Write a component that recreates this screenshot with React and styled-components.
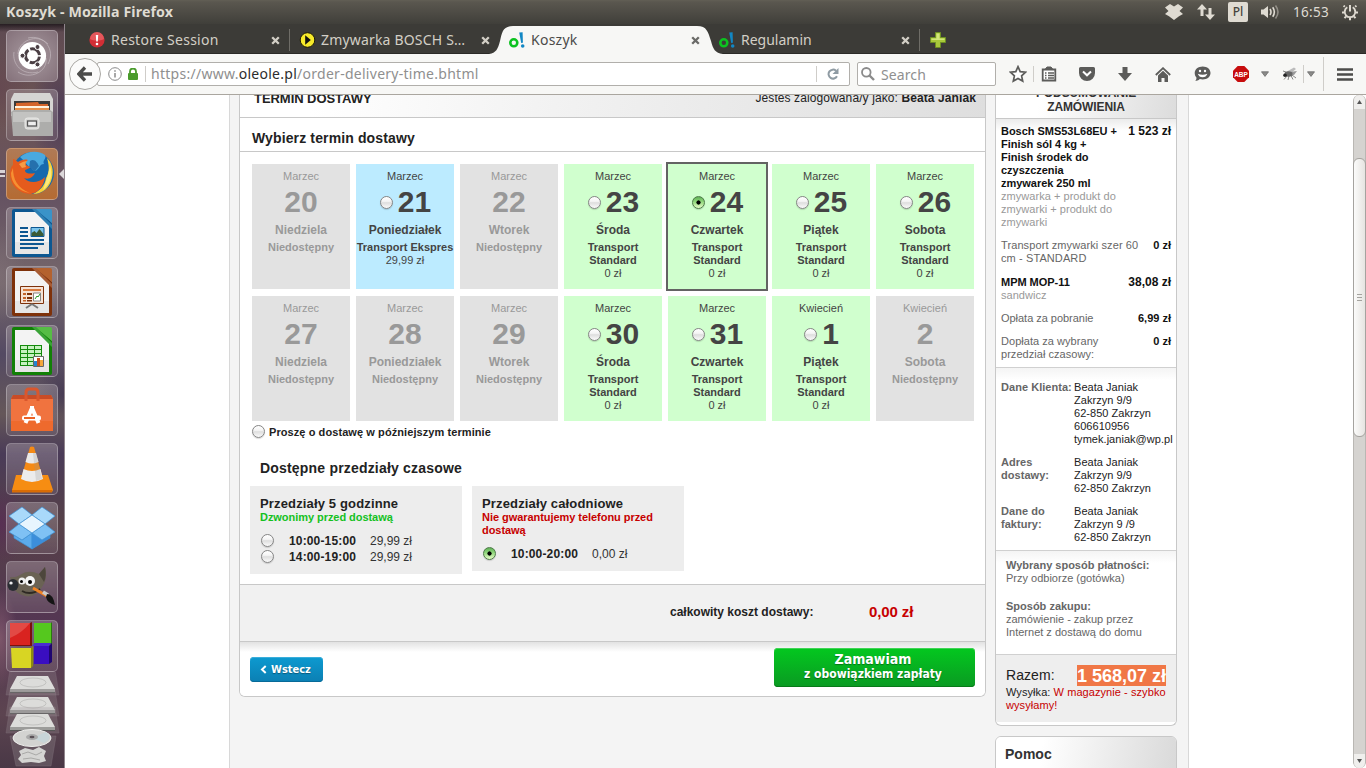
import React from 'react';
import styled, { createGlobalStyle, css } from 'styled-components';

const GlobalStyle = createGlobalStyle`
  * { box-sizing: border-box; }
  body { margin: 0; overflow: hidden; }
`;

const UI_FONT = '"Noto Sans", "Open Sans", sans-serif';
const PAGE_FONT = '"Liberation Sans", Arial, sans-serif';

/* ---------- desktop shell ---------- */

const Desktop = styled.div`
  width: 1366px;
  height: 768px;
  overflow: hidden;
  display: flex;
  flex-direction: column;
  font-family: ${UI_FONT};
`;

const TopPanel = styled.header`
  height: 24px;
  flex: none;
  display: flex;
  align-items: center;
  padding: 0 4px 0 6px;
  color: #dfdbd2;
  background: linear-gradient(#625f55 0, #5a574f 2px, #403f3a 100%);
`;

const WindowTitle = styled.div`
  flex: 1;
  font-size: 14.2px;
  font-weight: 700;
  line-height: 22px;
  letter-spacing: 0.13px;
`;

const Indicator = styled.div`
  width: ${(p) => p.$w}px;
  margin-left: ${(p) => p.$ml || 0}px;
  height: 24px;
  display: flex;
  align-items: center;
  justify-content: center;
`;

const LangBadge = styled.div`
  width: 20px;
  height: 20px;
  margin-left: 6px;
  border-radius: 2px;
  background: #dfdbd2;
  color: #45433d;
  font-size: 12px;
  font-weight: 500;
  line-height: 20px;
  text-align: center;
`;

const Clock = styled.div`
  width: 37px;
  margin-left: 9px;
  font-size: 13.5px;
  line-height: 22px;
  letter-spacing: 0.3px;
  white-space: nowrap;
`;

const Workspace = styled.div`
  flex: 1;
  display: flex;
  min-height: 0;
`;

const Launcher = styled.nav`
  width: 65px;
  flex: none;
  padding: 6px 0 0 6px;
  display: flex;
  flex-direction: column;
  gap: 7px;
  border-right: 1px solid #90858c;
  background:
    linear-gradient(rgba(20, 15, 18, 0.75), rgba(20, 15, 18, 0) 8px),
    radial-gradient(ellipse 30px 40px at 0 65px, rgba(100, 70, 80, 0.7), transparent),
    radial-gradient(ellipse 30px 60px at 60px 90px, rgba(55, 42, 88, 0.6), transparent),
    radial-gradient(ellipse 25px 50px at 0 250px, rgba(130, 115, 122, 0.5), transparent),
    radial-gradient(ellipse 30px 30px at 65px 370px, rgba(45, 35, 75, 0.5), transparent),
    radial-gradient(ellipse 30px 40px at 0 500px, rgba(90, 30, 95, 0.5), transparent),
    radial-gradient(ellipse 18px 50px at 0 615px, rgba(150, 105, 120, 0.6), transparent),
    linear-gradient(#5e4a52 0, #6d5454 90px, #655262 170px, #75676b 260px, #544a63 330px, #655759 390px, #4a3b58 430px, #564148 500px, #543653 600px, #5c4450 690px, #493846 100%);
`;

const Tile = styled.div`
  position: relative;
  width: 52px;
  height: 52px;
  flex: none;
  border-radius: 5px;
  border: 1px solid rgba(255, 255, 255, 0.28);
  background: ${(p) => p.$bg || 'linear-gradient(rgba(200,190,195,0.34), rgba(160,145,155,0.2))'};
  svg { display: block; margin: -1px; }
`;

const RunMark = styled.div`
  position: absolute;
  left: -7px;
  top: 21px;
  width: 5px;
  height: 7px;
  border-top: 3px solid #d8d4d6;
  border-bottom: 2px solid #d8d4d6;
`;

const FocusMark = styled.div`
  position: absolute;
  left: 52px;
  top: 20px;
  border: 5px solid transparent;
  border-left: 0;
  border-right-color: #dcd8da;
`;

const Stack = styled.div`
  margin: -7px 0 0 -6px;
  width: 65px;
  height: 96px;
  svg { display: block; }
`;

/* ---------- browser chrome ---------- */

const Browser = styled.main`
  flex: 1;
  display: flex;
  flex-direction: column;
  min-width: 0;
`;

const TabStrip = styled.div`
  height: 30px;
  flex: none;
  display: flex;
  padding-left: 14px;
  background: #3c3b37;
  border-bottom: 1px solid #2b2a27;
`;

const Tab = styled.div`
  position: relative;
  width: 210px;
  height: 30px;
  flex: none;
  display: flex;
  align-items: center;
  padding: 2px 8px 0 10px;
  color: ${(p) => (p.$active ? '#4b4b49' : '#d3cfc6')};
  ${(p) => p.$divider && css`
    &::after {
      content: '';
      position: absolute;
      right: -1px;
      top: 5px;
      width: 1px;
      height: 22px;
      background: #6f6d67;
    }
  `}
`;

const ActiveShape = styled.svg`
  position: absolute;
  left: -10px;
  top: 2px;
`;

const TabIcon = styled.div`
  position: relative;
  width: 16px;
  height: 16px;
  margin-right: 6px;
  svg { display: block; }
`;

const TabTitle = styled.div`
  position: relative;
  flex: 1;
  font-size: 14px;
  line-height: 20px;
  white-space: nowrap;
  letter-spacing: ${(p) => p.$ls || 0}px;
`;

const TabClose = styled.div`
  position: relative;
  width: 12px;
  height: 16px;
  display: flex;
  align-items: center;
  justify-content: center;
`;

const NewTab = styled.div`
  width: 38px;
  display: flex;
  align-items: center;
  justify-content: center;
  padding-top: 3px;
`;

const NavBar = styled.div`
  height: 41px;
  flex: none;
  display: flex;
  align-items: center;
  padding-left: 4px;
  background: #f7f7f5;
  border-bottom: 1px solid #aaa69f;
`;

const BackButton = styled.div`
  position: relative;
  z-index: 1;
  width: 32px;
  height: 32px;
  flex: none;
  border-radius: 50%;
  border: 1px solid #a9a7a3;
  background: #fbfbfa;
  display: flex;
  align-items: center;
  justify-content: center;
`;

const Field = styled.div`
  height: 24px;
  display: flex;
  align-items: center;
  background: #fff;
  border: 1px solid #b1afab;
  border-radius: 2px;
  color: #8f8f8f;
  font-size: 14px;
`;

const UrlField = styled(Field)`
  width: 753px;
  margin-left: -4px;
  padding-left: 8px;
`;

const SearchField = styled(Field)`
  width: 139px;
  margin-left: 7px;
  padding-left: 3px;
  gap: 6px;
  letter-spacing: 0.1px;
`;

const UrlText = styled.div`
  flex: 1;
  white-space: nowrap;
  line-height: 20px;
  letter-spacing: 0.27px;
  b { font-weight: 400; color: #2c2c2c; }
`;

const Rule = styled.div`
  width: 1px;
  height: ${(p) => p.$h || 16}px;
  margin: 0 ${(p) => p.$mr || 0}px 0 ${(p) => p.$ml || 0}px;
  flex: none;
  background: #cfcdc9;
`;

const Slot = styled.div`
  width: ${(p) => p.$w}px;
  margin-left: ${(p) => p.$ml || 0}px;
  flex: none;
  display: flex;
  align-items: center;
  justify-content: center;
`;

const Viewport = styled.div`
  flex: 1;
  min-height: 0;
  display: flex;
  overflow: hidden;
  background: #fff;
`;

const ScrollBar = styled.div`
  width: 13px;
  flex: none;
  display: flex;
  flex-direction: column;
  background: #d2d0cd;
  border: 1px solid #b9b7b3;
  border-top: 0;
  border-bottom: 0;
  border-radius: 6px;
`;

const ScrollArrow = styled.div`
  height: 14px;
  display: flex;
  align-items: center;
  justify-content: center;
  background: #f0efed;
  border-radius: ${(p) => (p.$down ? '0 0 6px 6px' : '6px 6px 0 0')};
`;

const ScrollTrough = styled.div`
  flex: ${(p) => (p.$h ? 'none' : 1)};
  height: ${(p) => (p.$h ? p.$h + 'px' : 'auto')};
  background: #d5d3d0;
`;

const ScrollThumb = styled.div`
  height: 279px;
  margin: 0 -1px;
  border: 1px solid #a5a39f;
  border-radius: 6px;
  background: linear-gradient(90deg, #fbfbfa, #e6e4e1);
  display: flex;
  flex-direction: column;
  align-items: center;
  justify-content: center;
  gap: 2px;
`;

const Grip = styled.div`
  width: 5px;
  height: 1px;
  background: #a5a39f;
`;

/* ---------- shop page ---------- */

const PageArea = styled.div`
  flex: 1;
  overflow: hidden;
  font-family: ${PAGE_FONT};
  color: #222;
`;

const Page = styled.div`
  width: 960px;
  height: 700px;
  margin: -15px 0 0 164px;
  padding: 0 11px 0 9px;
  display: flex;
  align-items: flex-start;
  gap: 9px;
  background: #f4f4f4;
  border: 1px solid #d8d8d8;
  border-width: 0 1px;
`;

const MainPanel = styled.section`
  width: 747px;
  flex: none;
  border: 1px solid #c8c8c8;
  border-top: 0;
  border-radius: 0 0 6px 6px;
  background: #fff;
  overflow: hidden;
`;

const PanelHeader = styled.div`
  height: 38px;
  padding: 0 9px 11px 14px;
  display: flex;
  align-items: flex-end;
  justify-content: space-between;
  font-size: 12px;
  line-height: 15px;
  letter-spacing: 0.1px;
  border-bottom: 1px solid #c8c8c8;
  background: linear-gradient(100deg, #fff 10%, #f1f1f1 45%, #dedede 100%);
  h1 { margin: 0; font-size: 13px; line-height: 15px; letter-spacing: -0.05px; }
`;

const SectionTitle = styled.h2`
  margin: 0;
  height: 34px;
  padding: 12px 12px 0;
  font-size: 14px;
  line-height: 16px;
  letter-spacing: 0.13px;
  border-bottom: 1px solid #c8c8c8;
`;

const CalendarGrid = styled.div`
  display: grid;
  grid-template-columns: repeat(7, 98px);
  grid-auto-rows: 125px;
  column-gap: 6px;
  row-gap: 7px;
  padding: 12px 12px 0;
`;

const tone = {
  off: css`background: #e2e2e2; color: #999;`,
  express: css`background: #bcebff; color: #444;`,
  std: css`background: #d0ffce; color: #444;`,
};

const DayCard = styled.div`
  ${(p) => tone[p.$kind]}
  padding-top: 6px;
  text-align: center;
  font-size: 11px;
  line-height: 13px;
  outline: ${(p) => (p.$selected ? '2px solid #636363' : 'none')};
`;

const DayNumber = styled.div`
  margin-top: 2px;
  padding-left: ${(p) => (p.$choice ? 1 : 0)}px;
  display: flex;
  align-items: center;
  justify-content: center;
  gap: 5px;
  font-size: 30px;
  font-weight: 700;
  line-height: 34px;
`;

const WeekDay = styled.div`
  margin: 4px 0;
  font-size: 12px;
  font-weight: 700;
  line-height: 14px;
`;

const Service = styled.div`
  font-weight: 700;
  white-space: pre-line;
  margin: 0 -2px;
`;

const Radio = styled.span`
  flex: none;
  width: 13px;
  height: 13px;
  margin-top: ${(p) => p.$mt || 0}px;
  border-radius: 50%;
  border: 1px solid ${(p) => (p.$on ? '#4d7a48' : '#858585')};
  box-shadow: 0 1px 1px rgba(0, 0, 0, 0.15);
  background: ${(p) =>
    p.$on
      ? 'radial-gradient(circle at 50% 50%, #000 0 1.8px, transparent 2.4px), linear-gradient(#5fb156, #94d97f 45%, #e6fbc8)'
      : 'linear-gradient(#fff, #f4f4f4 40%, #dedede 52%, #fafafa)'};
`;

const LaterOption = styled.div`
  height: 22px;
  padding-left: 12px;
  display: flex;
  align-items: center;
  gap: 4px;
  font-size: 11px;
  font-weight: 700;
  letter-spacing: 0.08px;
`;

const SlotsTitle = styled.h2`
  margin: 17px 0 10px 20px;
  font-size: 14px;
  line-height: 16px;
  letter-spacing: 0.19px;
`;

const SlotBoxes = styled.div`
  display: flex;
  align-items: flex-start;
  gap: 10px;
  padding: 0 10px 10px;
`;

const SlotBox = styled.div`
  width: 212px;
  padding: 10px 10px 9px;
  background: #ededed;
  h3 { margin: 0; font-size: 13px; line-height: 15px; letter-spacing: 0.15px; }
`;

const SlotNote = styled.p`
  margin: 0 0 9px;
  font-size: 11px;
  font-weight: 700;
  line-height: 13px;
  letter-spacing: -0.05px;
  color: ${(p) => p.$color};
`;

const TimeRow = styled.label`
  height: 16px;
  display: grid;
  grid-template-columns: 28px 81px auto;
  align-items: center;
  padding-left: 1px;
  font-size: 12px;
  line-height: 16px;
  white-space: nowrap;
  color: #333;
  b { color: #222; letter-spacing: 0.15px; }
`;

const CostBand = styled.div`
  height: 58px;
  padding: 19px 0 0 430px;
  display: flex;
  border: 1px solid #c8c8c8;
  border-width: 1px 0;
  background: #f1f1f1;
  font-weight: 700;
  font-size: 12px;
  line-height: 16px;
  span { width: 199px; }
  strong { color: #c70000; font-size: 15px; letter-spacing: -0.1px; }
`;

const Actions = styled.div`
  height: 54px;
  padding: 6px 10px 0;
  display: flex;
  justify-content: space-between;
  align-items: flex-start;
  background: linear-gradient(#e2e2e2, #fff 10px);
  font-family: "DejaVu Sans Condensed", "DejaVu Sans", sans-serif;
  font-weight: 700;
  color: #fff;
  text-shadow: 0 1px 1px rgba(0, 0, 0, 0.35);
`;

const BackLink = styled.div`
  width: 73px;
  height: 25px;
  margin-top: 9px;
  display: flex;
  align-items: center;
  gap: 4px;
  padding: 0 0 1px 11px;
  border-radius: 4px;
  background: linear-gradient(#0d9ad0, #0b7fb3);
  box-shadow: inset 0 -1px 0 #076a98, inset 0 1px 0 #3aaedb;
  font-size: 11px;
  svg { margin-left: -1px; }
`;

const OrderButton = styled.div`
  width: 201px;
  height: 39px;
  padding: 4px 3px 0 0;
  border-radius: 4px;
  background: linear-gradient(#03c81f, #0a9a22);
  box-shadow: inset 0 -1px 0 #077a18, inset 0 1px 0 #3fd455;
  text-align: center;
  font-size: 14px;
  line-height: 15px;
  small { display: block; font-size: 12px; line-height: 14px; }
`;

const Sidebar = styled.aside`
  width: 182px;
  flex: none;
`;

const SidePanel = styled.div`
  border: 1px solid #c8c8c8;
  border-top-width: ${(p) => (p.$open ? 0 : 1)}px;
  border-radius: ${(p) => (p.$open ? '0 0 6px 6px' : '6px')};
  margin-bottom: 10px;
  background: #fff;
  overflow: hidden;
  font-size: 11px;
  line-height: 13px;
`;

const SideHeader = styled.div`
  height: 39px;
  padding-top: 6px;
  text-align: center;
  font-size: 12px;
  font-weight: 700;
  line-height: 14px;
  letter-spacing: -0.1px;
  color: #333;
  border-bottom: 1px solid #c8c8c8;
  background: linear-gradient(100deg, #fff 25%, #dcdcdc 100%);
`;

const SideSection = styled.div`
  height: ${(p) => p.$h}px;
  padding: ${(p) => p.$pad};
  border-bottom: 1px solid #d0d0d0;
  background: linear-gradient(${(p) => p.$shade || '#f4f4f4'}, #fff 12px);
  color: #666;
`;

const OrderItem = styled.div`
  display: flex;
  justify-content: space-between;
  min-height: ${(p) => p.$h}px;
  margin-bottom: 10px;
  color: #666;
`;

const ItemName = styled.div`
  white-space: pre-line;
  letter-spacing: ${(p) => p.$ls ?? 0.04}px;
  b { color: #111; letter-spacing: -0.03px; }
  i { font-style: normal; color: #999; }
`;

const ItemPrice = styled.div`
  font-size: ${(p) => (p.$big ? 12 : 11)}px;
  font-weight: 700;
  color: #111;
  white-space: nowrap;
`;

const Contact = styled.div`
  display: grid;
  grid-template-columns: 73px auto;
  margin-bottom: 10px;
  white-space: pre;
  color: #222;
  letter-spacing: 0.04px;
  b { color: #666; }
`;

const PaymentInfo = styled.p`
  margin: 0 0 15px;
  white-space: pre-line;
`;

const TotalBox = styled.div`
  height: 67px;
  margin-bottom: 3px;
  padding: 10px 8px 0 10px;
  background: #eee;
  color: #222;
  letter-spacing: 0.07px;
  em { font-style: normal; color: #c70000; }
`;

const TotalRow = styled.div`
  display: flex;
  justify-content: space-between;
  align-items: flex-start;
  height: 21px;
  margin-right: 2px;
  font-size: 14px;
  line-height: 21px;
`;

const TotalSum = styled.strong`
  height: 21px;
  background: #f07746;
  color: #fff;
  font-size: 18px;
  line-height: 22px;
  letter-spacing: 0;
  white-space: nowrap;
`;

const HelpHeader = styled.div`
  height: 60px;
  padding: 9px;
  font-size: 14px;
  font-weight: 700;
  line-height: 16px;
  color: #333;
  background: linear-gradient(100deg, #fff 25%, #d8d8d8 100%);
`;

/* ---------- icons ---------- */

const G = '#5c5c5a';

const Favicon = () => (
  <svg width="16" height="16" viewBox="0 0 16 16" fill="none">
    <circle cx="4.8" cy="10.8" r="3.5" stroke="#0cc220" strokeWidth="2.6" />
    <path d="M10.2.5l3.4-.3.3 10.6-1.7.3z" fill="#1287c4" />
    <circle cx="13.700" cy="14" r="1.8" fill="#1287c4" />
  </svg>
);

const ErrorIcon = () => (
  <svg width="16" height="16"><circle cx="8" cy="8" r="7.6" fill="#d22e35" /><path d="M1 7a7 7 0 0 1 14 0c-4 2-10 2-14 0z" fill="#e4575b" /><path d="M6.8 3h2.4l-.4 6.4H7.2z" fill="#fff" /><circle cx="8" cy="12" r="1.3" fill="#fff" /></svg>
);

const PlayIcon = () => (
  <svg width="18" height="16"><circle cx="8.500" cy="8" r="7.300" fill="#f7ea2a" stroke="#1d1a05" /><path d="M6.200 3.200l5.600 4.800-5.600 4.800z" fill="#111" /></svg>
);

const Cross = ({ color }) => (
  <svg width="9" height="9"><path d="M1.2 1.2l6.6 6.6M7.8 1.2L1.2 7.8" stroke={color} strokeWidth="2.3" /></svg>
);

const Caret = () => <svg width="8" height="6"><path d="M.5.8h7L4 5.4z" fill="#8b8b89" stroke="#6b6b69" strokeWidth=".8" /></svg>;

const Doc = ({ color, dark, light, children }) => (
  <svg width="52" height="52">
    <path d="M8 2h24l14 14v32a2 2 0 0 1-2 2H8a2 2 0 0 1-2-2V4a2 2 0 0 1 2-2z" fill={dark} />
    <path d="M29 2h15a2 2 0 0 1 2 2v12z" fill={light} />
    <path d="M9 5h20.500L43 18.500V47H9z" fill="#f3f3f3" />
    <path d="M9 35h34v12H9z" fill="#dedede" opacity=".6" />
    <path d="M26 2h4l16 16v4z" fill={color} />
    {children}
  </svg>
);

function LauncherIcons() {
  return (
    <Launcher>
      <Tile $bg="radial-gradient(circle, #a89aa0, #84717a)">
        <svg width="52" height="52" fill="none">
          <path d="M12 24C12 12 30 2 42 14M22 8c16-4 28 12 20 26M40 28c2 14-16 22-28 14M8 22c-2 12 8 24 24 20" stroke="#c9bfc4" opacity=".6" />
          <circle cx="26.300" cy="25.700" r="13.800" fill="#fff" />
          <circle cx="26.500" cy="25.700" r="7" stroke="#4b3f44" strokeWidth="3" strokeDasharray="12.700 2" strokeDashoffset="-1" />
          <g fill="#4b3f44" stroke="#fff"><circle cx="16.500" cy="25.700" r="2.500" /><circle cx="31.500" cy="17" r="2.500" /><circle cx="31.500" cy="34.400" r="2.500" /></g>
        </svg>
      </Tile>
      <Tile>
        <svg width="52" height="52">
          <path d="M8 4h36l3 6v17H5V10z" fill="#d5d5d3" />
          <path d="M8 12h36v14H8z" fill="#3b3a38" />
          <path d="M10 14l22-1 1 2h9v10H10z" fill="#d5652a" />
          <path d="M9 17h34v2H9z" fill="#fff3df" />
          <path d="M9 19h34v6H9z" fill="#e6904b" />
          <path d="M5 23l3-2h36l3 2v24H7z" fill="#adadab" />
          <path d="M7 23h38v10H7z" fill="#c3c3c1" />
          <rect x="19" y="29" width="14" height="11" rx="2.500" fill="#d8d8d6" stroke="#e9e9e7" />
          <rect x="21.500" y="32" width="9" height="5" fill="#eee" stroke="#555" strokeWidth="1.300" />
        </svg>
      </Tile>
      <Tile $bg="linear-gradient(#b07a55, #b46b33)">
        <svg width="52" height="52">
          <circle cx="27" cy="25" r="21" fill="#1669ae" />
          <path d="M14 9c7-6 18-7 25-2 2 4-3 5-1 9-5 0-4 5-9 7-6-2-8-8-15-14z" fill="#49a9df" />
          <path d="M24 13c4-3 7 1 9 5l-4 5-6-3z" fill="#0e4b8c" opacity=".6" />
          <path d="M41 10c5 5 7 12 5 20-2 9-9 16-19 16 8-4 12-9 13-16 4-6 3-13 1-20z" fill="#f8cf35" />
          <path d="M44 18c3 8 1 18-7 24l4-12z" fill="#fbe97b" />
          <path d="M7 11c2 0 3 2 5 3 3-2 7-3 10-2-2 1-3 3-2 5l4 2c0 2-5 2-5 4 1 3 6 3 10 2-2 4-6 7-11 5 5 6 15 5 21-1-1 9-7 16-14 17C13 46 4 37 4 26c0-5 1-7 3-9z" fill="#e55b1d" />
          <path d="M7 20c0 11 4 20 17 25C12 43 5 35 5 25z" fill="#f69032" />
          <path d="M13 16c3-2 6-3 8-3-2 2-2 4-1 6l-4 1z" fill="#f79b45" />
        </svg>
        <RunMark />
        <FocusMark />
      </Tile>
      <Tile>
        <Doc color="#2d7fb3" dark="#0d5791" light="#3a93c8">
          <g fill="#0d5791"><path d="M14 20h8v2h-8zM14 24h8v2h-8zM14 28h8v2h-8zM14 32h24v2H14zM14 36h24v2H14zM14 40h18v2H14z" /></g>
          <path d="M25 20.500h13v9H25z" fill="#7bc4ec" stroke="#0d5791" /><path d="M25.500 29v-3l3-2 2 2 3-4 4 5v2z" fill="#3b5b35" />
        </Doc>
      </Tile>
      <Tile>
        <Doc color="#a85c34" dark="#7e310a" light="#b4622e">
          <path d="M14.500 20.500h23v17h-23z" fill="#f6e2d5" stroke="#7e310a" /><path d="M17 23h18v2H17z" fill="#d97b3e" />
          <path d="M17 27h3v2h-3zM17 31h3v2h-3zM17 34h3v1.500h-3z" fill="#c4632a" /><path d="M21 27h5v2h-5zM21 31h5v2h-5zM21 34h5v1.500h-5z" fill="#7e310a" />
          <path d="M27.500 27h7v8h-7z" fill="#fff" stroke="#888" /><path d="M29 33l2-3 1 1 2-3" stroke="#2a9a2a" fill="none" />
          <path d="M26 38l-6 4M26 38l6 4" stroke="#777" strokeWidth="2" />
        </Doc>
      </Tile>
      <Tile>
        <Doc color="#3aa337" dark="#118006" light="#56bd45">
          <path d="M14 20h22v21H14z" fill="#138a0c" />
          <g fill="#c6f1bf">{[0, 1, 2].flatMap((c) => [0, 1, 2, 3, 4].map((r) => <rect key={`${c}-${r}`} x={15 + c * 7} y={21 + r * 4} width="6" height="3" />))}</g>
          <path d="M27.500 31.500h10v10h-10z" fill="#fff" stroke="#666" /><path d="M28 36h3v5h-3z" fill="#2583d0" /><path d="M31 33h3v8h-3z" fill="#c84f1b" /><path d="M34 35h3v6h-3z" fill="#f3a73b" />
        </Doc>
      </Tile>
      <Tile>
        <svg width="52" height="52">
          <path d="M7 11h38l2 4v32H5V15z" fill="#f0733f" /><path d="M7 11h38l2 4H5z" fill="#c94c26" /><path d="M5 37h42v10H5z" fill="#ee6a2d" />
          <path d="M20 17V9q0-4 3-4h6q3 0 3 4v8" stroke="#d9572d" strokeWidth="3" fill="none" />
          <path d="M26 24l-6.500 15M26 24l6.500 15" stroke="#fff" strokeWidth="4" fill="none" /><path d="M24 22h4v4h-4z" fill="#fff" />
          <rect x="16" y="31.500" width="19" height="5" rx="2" fill="#fff" /><rect x="18" y="33" width="11" height="2" fill="#ec6327" />
        </svg>
      </Tile>
      <Tile>
        <svg width="52" height="52">
          <path d="M10 32h32l5 15-1 2H6v-2z" fill="#f68d12" /><path d="M6 47h40v2.500H6z" fill="#d96c05" />
          <path d="M24 4q2-1 4 0l9 32q-11 7-22 0z" fill="#f58a15" />
          <path d="M22 10h8l2.500 9q-6.500 3-13 0z" fill="#e9e9e9" /><path d="M17.500 26q8.500 4 17 0l2.500 10q-11 6-22 0z" fill="#ececec" />
          <path d="M27 10h3l6 26-6 2z" fill="#999" opacity=".25" />
        </svg>
      </Tile>
      <Tile>
        <svg width="52" height="52" stroke="#3e94d8" strokeWidth=".7">
          <path d="M3 14l13-9 10 8-13 9zM49 14L36 5l-10 8 13 9z" fill="#a9d9fa" />
          <path d="M8 33l8 5 10-7v16L8 36z" fill="#5cabec" /><path d="M44 33l-8 5-10-7v16l18-11z" fill="#3c8edb" />
          <path d="M3 30l10-8 13 9-10 7zM49 30l-10-8-13 9 10 7z" fill="#7fc1f4" />
          <path d="M13 22l13-9 13 9-13 9z" fill="#e8f5fe" />
        </svg>
      </Tile>
      <Tile>
        <svg width="52" height="52">
          <path d="M4 16q5 1 10-2 8-6 19-1L39 6q3 12-3 20-8 13-20 8-6-2-9-8z" fill="#6a6254" /><path d="M33 13l6-7q2 9-1 15z" fill="#4d463c" />
          <ellipse cx="7" cy="24" rx="5.500" ry="6" fill="#2a2d32" /><ellipse cx="5" cy="22" rx="1.700" ry="1.500" fill="#eee" />
          <circle cx="16" cy="20" r="3.500" fill="#eee" /><circle cx="24" cy="20" r="5" fill="#f5f5f5" /><circle cx="15.500" cy="20.500" r="1.500" /><circle cx="24" cy="21" r="2" />
          <path d="M16 30q9 5 18-2" stroke="#2e2923" strokeWidth="2" fill="none" />
          <path d="M27 27l14 8" stroke="#f08324" strokeWidth="3" /><path d="M37 31l5 3" stroke="#ccc" strokeWidth="3.500" /><path d="M41 33q6 0 8 11-8-2-9-8z" fill="#151515" />
        </svg>
      </Tile>
      <Tile>
        <svg width="52" height="52">
          <path d="M4 3h22v22H4z" fill="#d92320" /><path d="M4 3h20q-8 10-20 15z" fill="#e8645f" opacity=".6" /><path d="M26 2l-2 1v22H4v1h22z" fill="#7b0f0c" />
          <path d="M28 3h17v20H28z" fill="#55c81e" /><path d="M45 3l1-1v22H30l-2-1h17z" fill="#2a7a0e" />
          <path d="M5 28h20v20H6z" fill="#d8d523" /><path d="M25 28l2-2v20l-2 2z" fill="#8d8b10" />
          <path d="M26 26l3-3h16l-2 3z" fill="#4a2dd0" /><path d="M28 26h15v18H28z" fill="#3a0ec0" /><path d="M43 26l3-3v19l-3 2z" fill="#1f0670" />
        </svg>
      </Tile>
      <Stack>
        <svg width="65" height="96">
          {[0, 21, 38].map((dy) => (
            <g key={dy} transform={`translate(0 ${dy})`}>
              <path d="M10 -3h45l4 26H6z" fill="#9b9297" opacity=".28" stroke="#c8c0c4" strokeWidth=".5" />
              <path d="M17 4h31l7 13H10z" fill="#dcdcda" /><path d="M10 17h45v4H10z" fill="#9c9c9a" /><path d="M10 20h45v1H10z" fill="#555" />
              <ellipse cx="33" cy="10.500" rx="13" ry="4.500" fill="none" stroke="#c2c2c0" />
            </g>
          ))}
          <path d="M10 64h46l-5 30H16z" fill="#8f868b" opacity=".35" stroke="#c8c0c4" strokeWidth=".5" />
          <ellipse cx="32" cy="66" rx="19" ry="8.500" fill="#d3d3d1" stroke="#efefed" /><path d="M32 66l14-6q8 6-2 11z" fill="#c8d5d8" /><ellipse cx="32" cy="65" rx="6" ry="3" fill="#aaa" /><ellipse cx="32" cy="65" rx="2.500" ry="1.300" fill="#5b5258" />
          <path d="M19 79l6-3 8 2 6-3 7 4-2 5 2 5-7 2-8-1-9 1-4-4 3-4z" fill="#d5d5d3" /><path d="M22 82l6-2 8 3 6-3M23 87l8-1 9 2" stroke="#a9a9a7" fill="none" />
        </svg>
      </Stack>
    </Launcher>
  );
}

/* ---------- data ---------- */

const off = (m, d, w) => ({ m, d, w, kind: 'off', service: 'Niedostępny' });
const std = (m, d, w, extra) => ({ m, d, w, kind: 'std', service: 'Transport\nStandard', price: '0 zł', ...extra });

const days = [
  off('Marzec', 20, 'Niedziela'),
  { m: 'Marzec', d: 21, w: 'Poniedziałek', kind: 'express', service: 'Transport Ekspres', price: '29,99 zł' },
  off('Marzec', 22, 'Wtorek'),
  std('Marzec', 23, 'Środa'),
  std('Marzec', 24, 'Czwartek', { selected: true }),
  std('Marzec', 25, 'Piątek'),
  std('Marzec', 26, 'Sobota'),
  off('Marzec', 27, 'Niedziela'),
  off('Marzec', 28, 'Poniedziałek'),
  off('Marzec', 29, 'Wtorek'),
  std('Marzec', 30, 'Środa'),
  std('Marzec', 31, 'Czwartek'),
  std('Kwiecień', 1, 'Piątek'),
  off('Kwiecień', 2, 'Sobota'),
];

const contacts = [
  ['Dane Klienta:', 'Beata Janiak\nZakrzyn 9/9\n62-850 Zakrzyn\n606610956\ntymek.janiak@wp.pl'],
  ['Adres\ndostawy:', 'Beata Janiak\nZakrzyn 9/9\n62-850 Zakrzyn'],
  ['Dane do\nfaktury:', 'Beata Janiak\nZakrzyn 9 /9\n62-850 Zakrzyn'],
];

function SystemBar() {
  return (
    <TopPanel>
      <WindowTitle>Koszyk - Mozilla Firefox</WindowTitle>
      <Indicator $w={28}>
        <svg width="18" height="16" fill="#dfdbd2"><path d="M5 0l4 2.500L13 0l5 3.500L14.500 7 18 10l-4 2.200L9 16l-5-3.800L0 10l3.500-3L0 3.500z" /></svg>
      </Indicator>
      <Indicator $w={32} $ml={2}>
        <svg width="18" height="18" fill="#dfdbd2"><path d="M5 1l5 5.500H6.500V13h-3V6.500H0zM13 17l5-5.500h-3.500V5h-3v6.500H8z" /></svg>
      </Indicator>
      <LangBadge>Pl</LangBadge>
      <Indicator $w={28} $ml={8}>
        <svg width="20" height="16" fill="none" stroke="#dfdbd2" strokeWidth="1.600"><path d="M1 5.500h2.500L8 2v12l-4.500-3.500H1z" fill="#dfdbd2" stroke="none" /><path d="M10 5q2 3 0 6M12.700 3.300q3.300 4.700 0 9.400" /><path d="M15.500 1.500q5 6.500 0 13" opacity=".45" /></svg>
      </Indicator>
      <Clock>16:53</Clock>
      <Indicator $w={24} $ml={8}>
        <svg width="18" height="18" fill="none" stroke="#dfdbd2"><path d="M6.300 4.300A5.300 5.300 0 1 0 11.700 4.300" strokeWidth="1.900" /><path d="M9 2v6.500" strokeWidth="2" /><path d="M3.800 3.800L2.600 2.600M14.200 3.800l1.200-1.200M3.200 9.500H1M14.800 9.500H17M5 13.500l-1.500 1.600M13 13.500l1.500 1.600M9 15v2.200" strokeWidth="2" /></svg>
      </Indicator>
    </TopPanel>
  );
}

function Tabs() {
  return (
    <TabStrip>
      <Tab $divider>
        <TabIcon><ErrorIcon /></TabIcon>
        <TabTitle $ls={0.27}>Restore Session</TabTitle>
        <TabClose><Cross color="#d3cfc6" /></TabClose>
      </Tab>
      <Tab>
        <TabIcon><PlayIcon /></TabIcon>
        <TabTitle $ls={0.18}>Zmywarka BOSCH S…</TabTitle>
        <TabClose><Cross color="#d3cfc6" /></TabClose>
      </Tab>
      <Tab $active>
        <ActiveShape width="234" height="28">
          <path d="M0 28c7-1 9-5 11-13C13 6 14 0 24 0h184c10 0 11 6 14 15 2 8 4 12 12 13z" fill="#f7f7f5" />
        </ActiveShape>
        <TabIcon><Favicon /></TabIcon>
        <TabTitle $ls={0.25}>Koszyk</TabTitle>
        <TabClose><Cross color="#6a6a67" /></TabClose>
      </Tab>
      <Tab $divider>
        <TabIcon><Favicon /></TabIcon>
        <TabTitle>Regulamin</TabTitle>
        <TabClose><Cross color="#d3cfc6" /></TabClose>
      </Tab>
      <NewTab>
        <svg width="16" height="16"><path d="M5.500.5h5v5h5v5h-5v5h-5v-5h-5v-5h5z" fill="#a8c93a" stroke="#6d8f22" /><path d="M6.500 1.500h3v5h5v1.500h-13V6.500h5z" fill="#d2e67c" /></svg>
      </NewTab>
    </TabStrip>
  );
}

function Navigation() {
  return (
    <NavBar>
      <BackButton>
        <svg width="16" height="16"><path d="M8 1.500L1.800 8 8 14.500M2.500 8H15" stroke="#4c4c4a" strokeWidth="3.300" fill="none" /></svg>
      </BackButton>
      <UrlField>
        <Slot $w={17}>
          <svg width="14" height="14" fill="none" stroke="#8b8b8b"><circle cx="7" cy="7" r="6.300" /><path d="M7 6v4.500M7 3.300v1.500" strokeWidth="1.500" /></svg>
        </Slot>
        <Slot $w={19}>
          <svg width="10" height="12"><path d="M2 6V3.500a3 3 0 0 1 6 0V6" stroke="#4a9b2c" strokeWidth="1.800" fill="none" /><rect y="5" width="10" height="7" rx="1" fill="#4a9b2c" /></svg>
        </Slot>
        <Rule $ml={3} $mr={5} />
        <UrlText>https://www.<b>oleole.pl</b>/order-delivery-time.bhtml</UrlText>
        <Rule />
        <Slot $w={32}>
          <svg width="12" height="12" fill="none"><path d="M10 8.300A4.500 4.500 0 1 1 9 2.700" stroke="#8f9ba3" strokeWidth="2" /><path d="M11.500 0v6h-6z" fill="#8f9ba3" /></svg>
        </Slot>
      </UrlField>
      <SearchField>
        <svg width="14" height="14" fill="none" stroke="#8b8b8b"><circle cx="5.300" cy="5.300" r="4.300" strokeWidth="1.800" /><path d="M8.500 8.500L13 13" strokeWidth="2.400" /></svg>
        <span>Search</span>
      </SearchField>
      <Slot $ml={7} $w={30}>
        <svg width="18" height="18"><path d="M9 1.700l2.200 4.900 5.300.6-3.900 3.600 1.100 5.300L9 13.400l-4.700 2.700 1.100-5.300L1.500 7.200l5.300-.6z" fill="#fff" stroke={G} strokeWidth="1.700" /></svg>
      </Slot>
      <Rule />
      <Slot $w={30}>
        <svg width="16" height="16" fill="none" stroke={G}><path d="M1.700 3.500h12.600v11H1.700z" strokeWidth="1.800" fill="#fff" /><path d="M4 3.500L6 1h4l2 2.500z" fill={G} /><path d="M4 7h1.500M7 7h6M4 9.500h1.500M7 9.500h6M4 12h1.500M7 12h6" strokeWidth="1.400" /></svg>
      </Slot>
      <Slot $ml={4} $w={38}>
        <svg width="16" height="14"><path d="M1.500 0h13A1.500 1.500 0 0 1 16 1.500V6a8 8 0 0 1-16 0V1.500A1.500 1.500 0 0 1 1.500 0z" fill={G} /><path d="M4 4.500l4 3.800 4-3.800" stroke="#fff" strokeWidth="2" fill="none" /></svg>
      </Slot>
      <Slot $w={38}>
        <svg width="14" height="14"><path d="M4.500 0h5v6H14l-7 8-7-8h4.500z" fill={G} /></svg>
      </Slot>
      <Slot $w={38}>
        <svg width="16" height="15"><path d="M.8 8L8 1.200 15.200 8" stroke={G} strokeWidth="1.800" fill="none" /><path d="M3 8.500l5-4.700 5 4.700V15H9.500v-4h-3v4H3z" fill={G} /></svg>
      </Slot>
      <Slot $ml={1} $w={38}>
        <svg width="17" height="16"><path d="M8.700.5c4.500 0 7.800 2.800 7.800 6.500s-3.300 6.500-7.800 6.500c-1 0-2-.2-2.900-.4C4.500 14.500 2.500 15 1.200 15c1-1 1.400-2.200 1.200-3.500C1.300 10.300.7 8.800.7 7 .7 3.300 4.200.5 8.700.5z" fill={G} /><circle cx="6" cy="5" r="1.200" fill="#fff" /><circle cx="11" cy="5" r="1.200" fill="#fff" /><path d="M3.800 7.700q4.800 2 9.600 0-1.300 3.500-4.800 3.500T3.800 7.700z" fill="#fff" /></svg>
      </Slot>
      <Slot $ml={5} $w={30}>
        <svg width="16" height="16"><path d="M4.700 0h6.600L16 4.700v6.600L11.300 16H4.700L0 11.300V4.700z" fill="#c70d0d" /><text x="1.200" y="10.700" fontSize="7.200" fontWeight="700" fontFamily="Liberation Sans" fill="#fff" textLength="13.600" lengthAdjust="spacingAndGlyphs">ABP</text></svg>
      </Slot>
      <Slot $w={17}><Caret /></Slot>
      <Slot $ml={5} $w={24}>
        <svg width="16" height="14"><path d="M4 5L12 .5 14 2 9 6z" fill="#bbb" /><path d="M8 5l7-1-3 4-4-.5z" fill="#999" /><ellipse cx="6.500" cy="7" rx="4" ry="2.800" fill="#666" /><circle cx="3" cy="8.300" r="1.800" fill="#222" /><path d="M5 9l-3 3.500M7 9l-1 4M9 8.500l2 4M4 5L1 4M10 8l4 3" stroke="#555" strokeWidth=".7" /></svg>
      </Slot>
      <Rule $ml={1} $h={18} />
      <Slot $w={13}><Caret /></Slot>
      <Rule $ml={6} $h={34} />
      <Slot $w={42}>
        <svg width="16" height="13"><path d="M0 1.500h16M0 6.500h16M0 11.500h16" stroke="#4c4c4a" strokeWidth="2.600" /></svg>
      </Slot>
    </NavBar>
  );
}

function Delivery() {
  return (
    <MainPanel>
      <PanelHeader>
        <h1>TERMIN DOSTAWY</h1>
        <span>Jesteś zalogowana/y jako: <b>Beata Janiak</b></span>
      </PanelHeader>
      <SectionTitle>Wybierz termin dostawy</SectionTitle>
      <CalendarGrid>
        {days.map((d) => (
          <DayCard key={d.m + d.d} $kind={d.kind} $selected={d.selected}>
            <div>{d.m}</div>
            <DayNumber $choice={d.kind !== 'off'}>
              {d.kind !== 'off' && <Radio $on={d.selected} $mt={1} />}
              {d.d}
            </DayNumber>
            <WeekDay>{d.w}</WeekDay>
            <Service>{d.service}</Service>
            {d.price && <div>{d.price}</div>}
          </DayCard>
        ))}
      </CalendarGrid>
      <LaterOption><Radio $mt={-1} />Proszę o dostawę w późniejszym terminie</LaterOption>
      <SlotsTitle>Dostępne przedziały czasowe</SlotsTitle>
      <SlotBoxes>
        <SlotBox>
          <h3>Przedziały 5 godzinne</h3>
          <SlotNote $color="#15c11f">Dzwonimy przed dostawą</SlotNote>
          <TimeRow><Radio $mt={-1} /><b>10:00-15:00</b>29,99 zł</TimeRow>
          <TimeRow><Radio $mt={-1} /><b>14:00-19:00</b>29,99 zł</TimeRow>
        </SlotBox>
        <SlotBox>
          <h3>Przedziały całodniowe</h3>
          <SlotNote $color="#c70000">Nie gwarantujemy telefonu przed dostawą</SlotNote>
          <TimeRow><Radio $on $mt={-1} /><b>10:00-20:00</b>0,00 zł</TimeRow>
        </SlotBox>
      </SlotBoxes>
      <CostBand><span>całkowity koszt dostawy:</span><strong>0,00 zł</strong></CostBand>
      <Actions>
        <BackLink>
          <svg width="7" height="9"><path d="M5.700 1L2 4.500 5.700 8" stroke="#fff" strokeWidth="2" fill="none" /></svg>
          Wstecz
        </BackLink>
        <OrderButton>Zamawiam<small>z obowiązkiem zapłaty</small></OrderButton>
      </Actions>
    </MainPanel>
  );
}

function Summary() {
  return (
    <Sidebar>
      <SidePanel $open>
        <SideHeader>PODSUMOWANIE<br />ZAMÓWIENIA</SideHeader>
        <SideSection $h={249} $pad="6px 5px 0" $shade="#ebebeb">
          <OrderItem>
            <ItemName><b>{'Bosch SMS53L68EU +\nFinish sól 4 kg +\nFinish środek do\nczyszczenia\nzmywarek 250 ml'}</b>{'\n'}<i>{'zmywarka + produkt do\nzmywarki + produkt do\nzmywarki'}</i></ItemName>
            <ItemPrice $big>1 523 zł</ItemPrice>
          </OrderItem>
          <OrderItem $h={27}>
            <ItemName $ls={0.1}>{'Transport zmywarki szer 60\ncm - STANDARD'}</ItemName>
            <ItemPrice>0 zł</ItemPrice>
          </OrderItem>
          <OrderItem>
            <ItemName><b>MPM MOP-11</b>{'\n'}<i>sandwicz</i></ItemName>
            <ItemPrice $big>38,08 zł</ItemPrice>
          </OrderItem>
          <OrderItem>
            <ItemName $ls={-0.03}>Opłata za pobranie</ItemName>
            <ItemPrice>6,99 zł</ItemPrice>
          </OrderItem>
          <OrderItem>
            <ItemName>{'Dopłata za wybrany\nprzedział czasowy:'}</ItemName>
            <ItemPrice>0 zł</ItemPrice>
          </OrderItem>
        </SideSection>
        <SideSection $h={183} $pad="13px 0 0 5px">
          {contacts.map(([label, value]) => (
            <Contact key={label}><b>{label}</b><span>{value}</span></Contact>
          ))}
        </SideSection>
        <SideSection $h={104} $pad="8px 10px 0">
          <PaymentInfo><b>Wybrany sposób płatności:</b>{'\nPrzy odbiorze (gotówka)'}</PaymentInfo>
          <PaymentInfo><b>Sposób zakupu:</b>{'\nzamówienie - zakup przez\nInternet z dostawą do domu'}</PaymentInfo>
        </SideSection>
        <TotalBox>
          <TotalRow>Razem: <TotalSum>1 568,07 zł</TotalSum></TotalRow>
          Wysyłka: <em>W magazynie - szybko wysyłamy!</em>
        </TotalBox>
      </SidePanel>
      <SidePanel>
        <HelpHeader>Pomoc</HelpHeader>
      </SidePanel>
    </Sidebar>
  );
}

export default function App() {
  return (
    <Desktop>
      <GlobalStyle />
      <SystemBar />
      <Workspace>
        <LauncherIcons />
        <Browser>
          <Tabs />
          <Navigation />
          <Viewport>
            <PageArea>
              <Page>
                <Delivery />
                <Summary />
              </Page>
            </PageArea>
            <ScrollBar>
              <ScrollArrow><svg width="5" height="4"><path d="M0 4l2.500-4L5 4z" fill="#555" /></svg></ScrollArrow>
              <ScrollTrough $h={49} />
              <ScrollThumb><Grip /><Grip /><Grip /></ScrollThumb>
              <ScrollTrough />
              <ScrollArrow $down><svg width="5" height="4"><path d="M0 0l2.500 4L5 0z" fill="#555" /></svg></ScrollArrow>
            </ScrollBar>
          </Viewport>
        </Browser>
      </Workspace>
    </Desktop>
  );
}
